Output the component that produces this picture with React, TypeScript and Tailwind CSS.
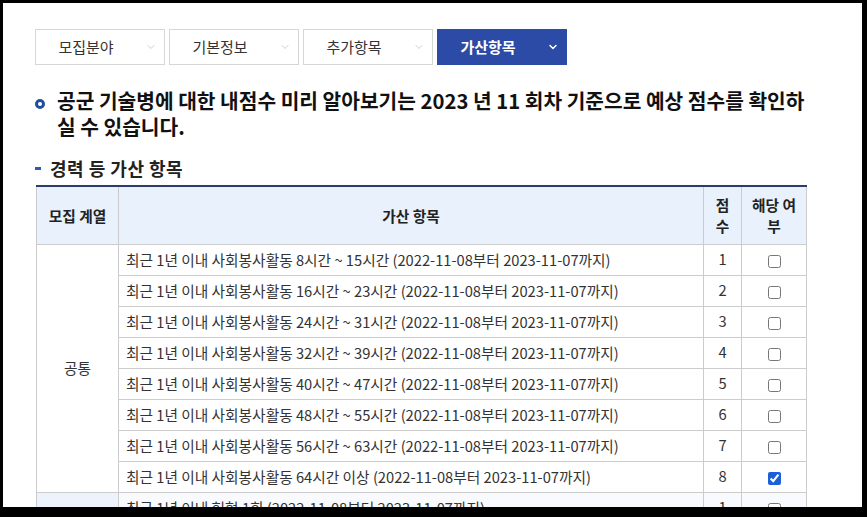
import React from "react";
import { ChevronDown } from "lucide-react";

const tabs = [
  { label: "모집분야", active: false },
  { label: "기본정보", active: false },
  { label: "추가항목", active: false },
  { label: "가산항목", active: true },
];

const rows = [
  { text: "최근 1년 이내 사회봉사활동 8시간 ~ 15시간 (2022-11-08부터 2023-11-07까지)", score: 1, checked: false },
  { text: "최근 1년 이내 사회봉사활동 16시간 ~ 23시간 (2022-11-08부터 2023-11-07까지)", score: 2, checked: false },
  { text: "최근 1년 이내 사회봉사활동 24시간 ~ 31시간 (2022-11-08부터 2023-11-07까지)", score: 3, checked: false },
  { text: "최근 1년 이내 사회봉사활동 32시간 ~ 39시간 (2022-11-08부터 2023-11-07까지)", score: 4, checked: false },
  { text: "최근 1년 이내 사회봉사활동 40시간 ~ 47시간 (2022-11-08부터 2023-11-07까지)", score: 5, checked: false },
  { text: "최근 1년 이내 사회봉사활동 48시간 ~ 55시간 (2022-11-08부터 2023-11-07까지)", score: 6, checked: false },
  { text: "최근 1년 이내 사회봉사활동 56시간 ~ 63시간 (2022-11-08부터 2023-11-07까지)", score: 7, checked: false },
  { text: "최근 1년 이내 사회봉사활동 64시간 이상 (2022-11-08부터 2023-11-07까지)", score: 8, checked: true },
];

const blood = [
  "최근 1년 이내 헌혈 1회 (2022-11-08부터 2023-11-07까지)",
  "최근 1년 이내 헌혈 2회 (2022-11-08부터 2023-11-07까지)",
  "최근 1년 이내 헌혈 3회 (2022-11-08부터 2023-11-07까지)",
];

function Box({ checked }: { checked: boolean }) {
  return (
    <input
      type="checkbox"
      checked={checked}
      readOnly
      className="w-[13px] h-[13px] m-0 align-middle accent-[#1b5fd9]"
    />
  );
}

export default function App() {
  return (
    <div className="w-[867px] h-[517px] bg-black pt-[3px] pl-[3px] pr-[5px] pb-[10px]">
      <div
        className="w-full h-full bg-white overflow-hidden pl-[32px] pt-[26px]"
        style={{ fontFamily: '"Noto Sans CJK KR", "Noto Sans", sans-serif' }}
      >
        {/* tabs */}
        <div className="flex gap-[4px]">
          {tabs.map((t) => (
            <div
              key={t.label}
              className={
                t.active
                  ? "w-[130px] h-[36px] flex items-center bg-[#2b4ba7] border border-[#2b4ba7] text-white font-bold"
                  : "w-[130px] h-[36px] flex items-center bg-white border border-[#d6d6d6] text-[#333]"
              }
            >
              <span className="w-[100px] text-center text-[15px] leading-[20px]">{t.label}</span>
              <ChevronDown
                size={12}
                strokeWidth={t.active ? 3 : 1.5}
                className={t.active ? "ml-[9px] text-white" : "ml-[9px] text-[#bdbdbd]"}
              />
            </div>
          ))}
        </div>

        {/* heading */}
        <div className="mt-[22px] flex items-start w-[790px]">
          <div className="mt-[12px] w-[10px] h-[10px] shrink-0 rounded-full border-[3px] border-[#1f4fa0]" />
          <div className="ml-[12px] text-[20.3px] leading-[26px] font-bold text-[#111] whitespace-nowrap">
            <div>공군 기술병에 대한 내점수 미리 알아보기는 2023 년 11 회차 기준으로 예상 점수를 확인하</div>
            <div>실 수 있습니다.</div>
          </div>
        </div>

        {/* subheading */}
        <div className="mt-[17px] flex items-center">
          <div className="w-[6px] h-[3px] bg-[#2a5db0]" />
          <div className="ml-[9px] text-[18px] leading-[24px] tracking-[0.5px] font-bold text-[#222]">
            경력 등 가산 항목
          </div>
        </div>

        {/* table */}
        <table className="mt-[5px] ml-[1px] w-[770px] table-fixed border-collapse text-[14.7px] text-[#333]">
          <colgroup>
            <col className="w-[82px]" />
            <col className="w-[585px]" />
            <col className="w-[38px]" />
            <col className="w-[65px]" />
          </colgroup>
          <thead>
            <tr className="bg-[#e8f1fc]">
              <th className="h-[58px] p-0 border border-[#cccccc] border-t-2 border-t-[#2c3d6c] font-bold text-[#222] leading-[21px]">
                모집 계열
              </th>
              <th className="p-0 border border-[#cccccc] border-t-2 border-t-[#2c3d6c] font-bold text-[#222] leading-[21px]">
                가산 항목
              </th>
              <th className="p-0 border border-[#cccccc] border-t-2 border-t-[#2c3d6c] font-bold text-[#222] leading-[21px]">
                점<br />수
              </th>
              <th className="p-0 border border-[#cccccc] border-t-2 border-t-[#2c3d6c] font-bold text-[#222] leading-[21px]">
                해당 여<br />부
              </th>
            </tr>
          </thead>
          <tbody>
            {rows.map((r, i) => (
              <tr key={r.score}>
                {i === 0 && (
                  <td rowSpan={8} className="p-0 border border-[#cccccc] text-center align-middle">
                    공통
                  </td>
                )}
                <td className="h-[31px] py-0 pl-[7px] pr-0 border border-[#cccccc] leading-[20px] whitespace-nowrap">
                  {r.text}
                </td>
                <td className="p-0 border border-[#cccccc] text-center">{r.score}</td>
                <td className="p-0 border border-[#cccccc] text-center">
                  <Box checked={r.checked} />
                </td>
              </tr>
            ))}
            {blood.map((b, i) => (
              <tr key={b} className={i === 0 ? "bg-[#f8fafd]" : ""}>
                {i === 0 && (
                  <td rowSpan={3} className="p-0 border border-[#cccccc] bg-[#edf3fc] text-center align-middle">
                    헌혈
                  </td>
                )}
                <td className="h-[31px] py-0 pl-[7px] pr-0 border border-[#cccccc] leading-[20px] whitespace-nowrap">
                  {b}
                </td>
                <td className="p-0 border border-[#cccccc] text-center">{i + 1}</td>
                <td className="p-0 border border-[#cccccc] text-center">
                  <Box checked={false} />
                </td>
              </tr>
            ))}
          </tbody>
        </table>
      </div>
    </div>
  );
}
